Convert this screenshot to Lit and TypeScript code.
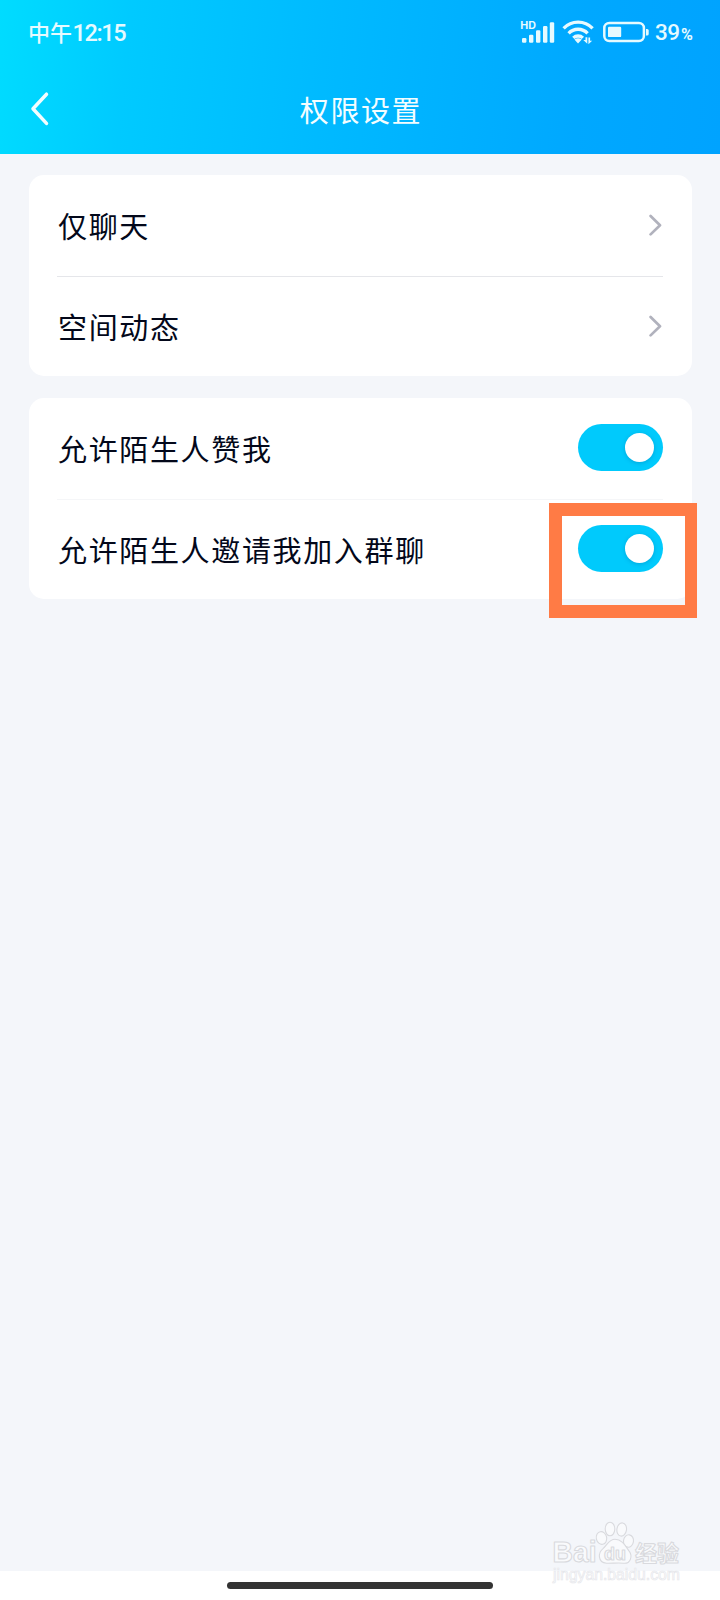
import { LitElement, html, css, svg } from "lit";
import { customElement, property } from "lit/decorators.js";

@customElement("status-bar")
class StatusBar extends LitElement {
  static styles = css`
    :host { display: flex; justify-content: space-between; height: 64px; padding: 0 27px 0 28px; color: #e6faff; box-sizing: border-box; }
    .time { display: flex; font-size: 22px; line-height: 63px; font-weight: 500; white-space: nowrap; }
    .digits { font-family: "Roboto", sans-serif; font-size: 23.5px; line-height: 66px; letter-spacing: -1.4px; margin-left: 0.5px; }
    .right { display: flex; }
    .icons { display: block; width: 129px; height: 64px; }
    .hd { font: 700 10px "Inter", sans-serif; }
    .percent { display: flex; width: 38px; margin-left: 6px; font-family: "Roboto", sans-serif; font-size: 22.5px; line-height: 65px; font-weight: 500; letter-spacing: -0.5px; }
    .sign { font-size: 16px; line-height: 70px; margin-left: 1.5px; font-weight: 700; }
  `;
  render() {
    const bars = [[522, 38], [529, 34.7], [536, 30.3], [543, 26], [549.8, 22.3]];
    return html`
      <div class="time"><span>中午</span><span class="digits">12:15</span></div>
      <div class="right">
        <svg class="icons" viewBox="520 0 129 64" fill="currentColor">
          <text class="hd" x="520.3" y="29.2" textLength="15.7" lengthAdjust="spacingAndGlyphs">HD</text>
          ${bars.map(([x, y]) => svg`<rect x=${x} y=${y} width="4.4" height=${42.7 - y} rx="1.2"/>`)}
          <g fill="none" stroke="currentColor" stroke-width="3.3">
            <path d="M563.6 28.3a20 20 0 0 1 29 0"/>
            <path d="M568.6 33.4a13 13 0 0 1 19 0"/>
            <path d="M573.3 37.9a7 7 0 0 1 9.6 0" />
          </g>
          <path d="M574.4 39.6q3.7-2.8 7.4 0L578 43.4z"/>
          <path d="M583.3 40.1h2.2v-2.8h1.8v6.4zM588.4 37.4h1.7v3.4h2.1l-3.8 3.4z"/>
          <rect x="604.3" y="23" width="39.6" height="18" rx="5" fill="none" stroke="currentColor" stroke-width="2.5"/>
          <rect x="608" y="26.7" width="13.2" height="10.4" rx="1.2"/>
          <path d="M646 29h1.2q1.5 0 1.5 1.5v3.6q0 1.5-1.5 1.5H646z"/>
        </svg>
        <div class="percent"><span>39</span><span class="sign">%</span></div>
      </div>`;
  }
}

@customElement("setting-row")
class SettingRow extends LitElement {
  @property() label = "";
  @property() kind = "link";
  static styles = css`
    :host { display: flex; align-items: center; justify-content: space-between; height: 100.7px; }
    .label { font-size: 29px; letter-spacing: 1.65px; line-height: 44px; color: #03081a; white-space: nowrap; padding-left: 1px; }
    .chevron { display: block; width: 14px; height: 22px; margin-right: 1px; }
    .toggle { width: 85px; height: 47px; border-radius: 24px; background: #00cafc; display: flex; align-items: center; justify-content: flex-end; padding-right: 9px; margin-bottom: 1px; box-sizing: border-box; }
    .knob { width: 29px; height: 29px; border-radius: 50%; background: #fff; box-shadow: 0 1px 4px rgba(0, 80, 140, 0.28); }
  `;
  render() {
    return html`<span class="label">${this.label}</span>
      ${this.kind === "link"
        ? html`<svg class="chevron" viewBox="0 0 14 22" fill="none" stroke="#b1b2bd" stroke-width="2.7" stroke-linecap="round" stroke-linejoin="round"><path d="M2.6 2L12 11.2l-9.4 9.2"/></svg>`
        : html`<div class="toggle"><div class="knob"></div></div>`}`;
  }
}

@customElement("app-root")
class AppRoot extends LitElement {
  static styles = css`
    :host { display: flex; flex-direction: column; position: relative; width: 720px; height: 1600px; overflow: hidden; background: #f4f6fa; font-family: "Noto Sans CJK SC", sans-serif; }
    .header { height: 154px; background: linear-gradient(96deg, #00dcff 0%, #00caff 18%, #00baff 45%, #00a8ff 80%, #00a3ff 100%); }
    .nav { display: grid; grid-template-columns: 100px 1fr 100px; align-items: center; height: 90px; color: #f3fdff; }
    .back { display: block; width: 22px; height: 36px; margin-left: 29px; }
    .title { font-size: 29px; letter-spacing: 1.6px; text-align: center; line-height: 44px; padding-left: 2px; margin-bottom: 1px; }
    .content { flex: 1; display: flex; flex-direction: column; gap: 21.5px; padding: 21px 28.5px 0; }
    .card { display: flex; flex-direction: column; height: 201.4px; padding: 0 28.5px; box-sizing: border-box; background: #fff; border-radius: 15px; }
    .line { height: 1px; margin-bottom: -1px; background: #e5e6ea; }
    .line.soft { background: #f5f6f8; }
    .gesture { height: 29px; padding-top: 11px; box-sizing: border-box; background: #fff; }
    .pill { width: 266px; height: 7px; margin: 0 auto; border-radius: 4px; background: #333; }
    .highlight { position: absolute; left: 549px; top: 503px; width: 148px; height: 115px; box-sizing: border-box; border: 13px solid #ff7b45; border-right-width: 12px; }
    .watermark { position: absolute; left: 545px; top: 1516px; width: 145px; height: 76px; }
    .brand { font: 700 29px "Liberation Sans", sans-serif; }
    .du { font: 700 18px "Liberation Sans", sans-serif; }
    .cn { font: 700 22px "Noto Sans CJK SC", sans-serif; }
    .url { font: 400 16.5px "Liberation Sans", sans-serif; }
  `;
  render() {
    return html`
      <div class="header">
        <status-bar></status-bar>
        <div class="nav">
          <svg class="back" viewBox="0 0 22 36" fill="none" stroke="currentColor" stroke-width="3.5" stroke-linecap="round" stroke-linejoin="round"><path d="M17.5 3.2L4 17.8 17.5 32.4"/></svg>
          <div class="title">权限设置</div>
        </div>
      </div>
      <div class="content">
        <div class="card">
          <setting-row label="仅聊天"></setting-row>
          <div class="line"></div>
          <setting-row label="空间动态"></setting-row>
        </div>
        <div class="card">
          <setting-row label="允许陌生人赞我" kind="toggle"></setting-row>
          <div class="line soft"></div>
          <setting-row label="允许陌生人邀请我加入群聊" kind="toggle"></setting-row>
        </div>
      </div>
      <div class="gesture"><div class="pill"></div></div>
      <div class="highlight"></div>
      <svg class="watermark" viewBox="545 1516 145 76" fill="#f9fafc" stroke="#d9dade" stroke-width="1.1" stroke-linejoin="round">
        <text class="brand" x="552.5" y="1561.5" textLength="44" lengthAdjust="spacingAndGlyphs">Bai</text>
        <g>
          <ellipse cx="601.5" cy="1538" rx="5.2" ry="6.4" transform="rotate(-12 601.5 1538)"/>
          <ellipse cx="610" cy="1529" rx="4.8" ry="6.8"/>
          <ellipse cx="621.7" cy="1529.5" rx="4.8" ry="6.6" transform="rotate(8 621.7 1529.5)"/>
          <ellipse cx="628.5" cy="1541" rx="5" ry="6.2" transform="rotate(8 628.5 1541)"/>
          <path d="M615 1539.2c-6 0-8 6-12 9.4-5 4-5.6 14 3.5 14.6 5 .3 12-.8 17 0 7 .8 9.2-7 6-11.6-3.5-4.7-7-12.4-14.5-12.4z"/>
        </g>
        <text class="du" x="604" y="1559.5" textLength="22" lengthAdjust="spacingAndGlyphs">du</text>
        <text class="cn" x="635" y="1560.5" textLength="44" lengthAdjust="spacingAndGlyphs">经验</text>
        <text class="url" x="553" y="1579.5" textLength="127" lengthAdjust="spacingAndGlyphs" fill="#fdfdfe" stroke="#e6e7eb" stroke-width="0.7">jingyan.baidu.com</text>
      </svg>`;
  }
}
